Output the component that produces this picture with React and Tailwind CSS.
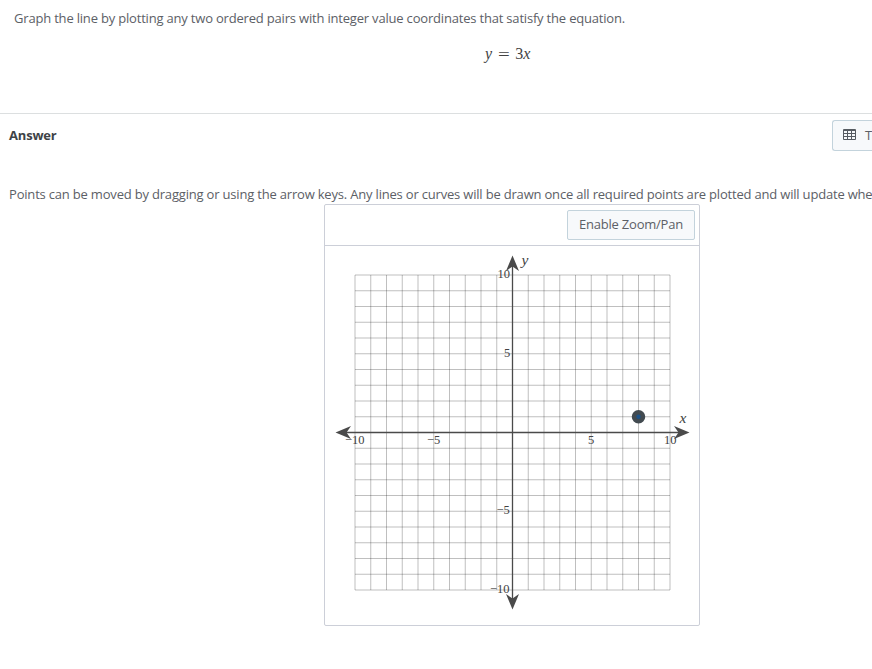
import React from 'react';

const UNIT = 15.75;
const ORIGIN = { x: 187.5, y: 186.5 };
const LINES = Array.from({ length: 21 }, (_, i) => i - 10);

const px = (x) => ORIGIN.x + x * UNIT;
const py = (y) => ORIGIN.y - y * UNIT;

const labels = [
  { text: '−10', x: 20, y: 197.5 },
  { text: '−5', x: 102, y: 197.5 },
  { text: '5', x: 263, y: 197.5 },
  { text: '10', x: 339, y: 197.5 },
  { text: '10', x: 172.5, y: 31.5 },
  { text: '5', x: 179, y: 110.5 },
  { text: '−5', x: 171.5, y: 267.5 },
  { text: '−10', x: 165, y: 346.5 },
];

const TableIcon = () => (
  <svg width="13" height="11" viewBox="0 0 13 11" className="mb-px shrink-0">
    <rect width="13" height="11" rx="1" fill="#565b61" />
    {[2, 5, 8].map((y) =>
      [1, 5, 9].map((x) => (
        <rect key={`${x}-${y}`} x={x} y={y} width="3" height="2" fill="#f7f9fb" />
      ))
    )}
  </svg>
);

const Arrow = ({ x, y, angle }) => (
  <path
    d="M0 0 L-15.5 -6.5 L-11 0 L-15.5 6.5 Z"
    fill="#4a4a4a"
    transform={`translate(${x} ${y}) rotate(${angle})`}
  />
);

const Graph = () => (
  <svg width="374" height="379" viewBox="0 0 374 379" className="block tracking-normal">
    <g stroke="#000" strokeOpacity="0.25" strokeWidth="1">
      {LINES.map((n) => (
        <g key={n}>
          <line x1={px(n)} y1={py(10)} x2={px(n)} y2={py(-10)} />
          <line x1={px(-10)} y1={py(n)} x2={px(10)} y2={py(n)} />
        </g>
      ))}
    </g>
    <g stroke="#4a4a4a" strokeWidth="1.3">
      <line x1="20" y1={ORIGIN.y} x2="356" y2={ORIGIN.y} />
      <line x1={ORIGIN.x} y1="18" x2={ORIGIN.x} y2="354" />
    </g>
    <Arrow x={364.5} y={ORIGIN.y} angle={0} />
    <Arrow x={10.5} y={ORIGIN.y} angle={180} />
    <Arrow x={ORIGIN.x} y={9.5} angle={-90} />
    <Arrow x={ORIGIN.x} y={363.5} angle={90} />
    <g fill="#424242" fontFamily="'Liberation Serif', serif" fontSize="12.5">
      {labels.map((l) => (
        <text key={`${l.x}-${l.y}`} x={l.x} y={l.y}>
          {l.text}
        </text>
      ))}
    </g>
    <g fill="#424242" fontFamily="'Liberation Serif', serif" fontSize="15.5" fontStyle="italic">
      <text x="196.5" y="19">y</text>
      <text x="354.5" y="176.5">x</text>
    </g>
    <circle cx={px(8)} cy={py(1)} r="4.5" fill="#1c5288" stroke="#424a50" strokeWidth="4.5" />
  </svg>
);

const App = () => {
  return (
    <div className="h-[669px] w-full overflow-hidden bg-white font-['Open_Sans',sans-serif] text-[13px] leading-[18px] tracking-[-0.19px] text-[#5c6066]">
      <section className="h-[114px] border-b border-[#dcdfe0] pl-[14px] pt-[9px]">
        <p className="whitespace-nowrap">
          Graph the line by plotting any two ordered pairs with integer value coordinates that satisfy the equation.
        </p>
        <p className="ml-[471px] mt-[18px] flex font-['Liberation_Serif',serif] text-[16px] tracking-normal text-[#424242]">
          <i>y</i>
          <span className="ml-[6px] inline-block origin-left scale-x-[1.3] pt-px">=</span>
          <span className="ml-[8px]">3</span>
          <i>x</i>
        </p>
      </section>
      <section>
        <div className="flex h-[71px] items-start justify-between pl-[9px] pt-[6px]">
          <h2 className="mt-[6px] font-bold text-[#3e4347]">Answer</h2>
          <button className="flex h-[31px] w-10 items-center gap-[9px] overflow-hidden rounded-l-[3px] border border-r-0 border-[#c3d3dc] bg-[#f7f9fb] pb-px pl-[10px]">
            <TableIcon />
            <span>Tables</span>
          </button>
        </div>
        <p className="h-[19px] whitespace-nowrap pl-[9px]">
          Points can be moved by dragging or using the arrow keys. Any lines or curves will be drawn once all required points are plotted and will update whenever a point is moved.
        </p>
        <div className="ml-[324px] w-[376px] rounded-[2px] border border-[#cccfd8]">
          <div className="flex h-[41px] justify-end border-b border-[#cccfd8] pr-1 pt-[5px]">
            <button className="h-[30px] w-32 rounded-[2px] border border-[#c3d3dc] bg-[#f7f9fb] pb-0.5 tracking-[-0.22px]">
              Enable Zoom/Pan
            </button>
          </div>
          <Graph />
        </div>
      </section>
    </div>
  );
};

export default App;
